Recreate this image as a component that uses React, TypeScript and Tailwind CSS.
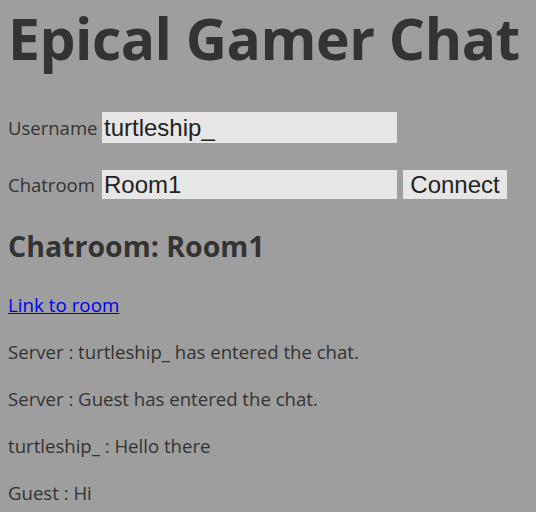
import React from "react";

export default function App() {
  const msgs = [
    "Server : turtleship_ has entered the chat.",
    "Server : Guest has entered the chat.",
    "turtleship_ : Hello there",
    "Guest : Hi",
  ];
  const arial = { fontFamily: '"Liberation Sans", Arial, sans-serif' };
  return (
    <div
      className="min-h-[512px] w-[536px] overflow-hidden bg-[#9e9e9e] px-2 text-[#333333]"
      style={{ fontFamily: '"Open Sans", "Noto Sans", sans-serif' }}
    >
      <h1 className="text-[57px] font-bold leading-[76px] whitespace-nowrap tracking-[-0.5px]">
        Epical Gamer Chat
      </h1>
      <div className="mt-[36px] flex h-[31px] items-center text-[18.5px]">
        <span className="w-[94px]">Username</span>
        <input
          className="h-[31px] w-[295px] bg-[#e6e6e6] px-[2px] text-[24px] text-[#222] outline-none"
          style={arial}
          defaultValue="turtleship_"
        />
      </div>
      <div className="mt-[27px] flex h-[29px] items-center text-[18.5px]">
        <span className="w-[94px]">Chatroom</span>
        <input
          className="h-[29px] w-[295px] bg-[#e6e6e6] px-[2px] text-[24px] text-[#222] outline-none"
          style={arial}
          defaultValue="Room1"
        />
        <button
          className="ml-[6px] h-[29px] w-[104px] bg-[#e6e6e6] text-[24px] leading-none text-[#222]"
          style={arial}
        >
          Connect
        </button>
      </div>
      <h2 className="mt-[30px] text-[28.5px] font-bold leading-[34px]">Chatroom: Room1</h2>
      <a href="#" className="mt-[29px] block w-fit text-[18.8px] leading-[26px] text-[#0000ee] underline">
        Link to room
      </a>
      <div className="text-[18.6px] leading-[26px]">
        {msgs.map((m, i) => (
          <p key={i} className="mt-[21px]">
            {m}
          </p>
        ))}
      </div>
    </div>
  );
}
